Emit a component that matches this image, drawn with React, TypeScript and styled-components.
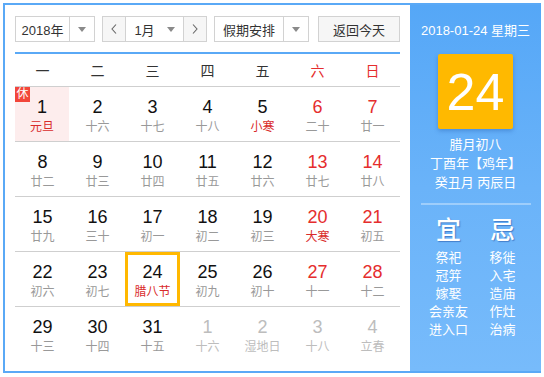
import React from 'react';
import styled, { createGlobalStyle } from 'styled-components';

const GlobalStyle = createGlobalStyle`
  html, body {
    margin: 0;
    padding: 0;
    background: #ffffff;
  }
  body {
    font-family: "Liberation Sans", Arial, "Noto Sans CJK SC", sans-serif;
  }
`;

const Frame = styled.div`
  margin: 3px;
  width: 536px;
  height: 366px;
  border: 2px solid #5aa9f6;
  border-right: none;
  display: flex;
  background: #ffffff;
`;

const Main = styled.div`
  width: 385px;
  padding: 11px 10px 0 10px;
  display: flex;
  flex-direction: column;
`;

const Toolbar = styled.div`
  display: flex;
  height: 26px;
  align-items: stretch;
`;

const SelectBox = styled.div<{ $w: number; $ml?: number }>`
  width: ${(p) => p.$w}px;
  margin-left: ${(p) => p.$ml || 0}px;
  box-sizing: border-box;
  border: 1px solid #d2d2d2;
  display: flex;
  align-items: stretch;
  background: #ffffff;
  font-size: 13px;
  color: #333;
`;

const SelectLabel = styled.div`
  flex: 1;
  display: flex;
  align-items: center;
  justify-content: center;
`;

const ArrowCell = styled.div<{ $border?: boolean }>`
  width: 24px;
  display: flex;
  align-items: center;
  justify-content: center;
  border-left: ${(p) => (p.$border ? '1px solid #d2d2d2' : 'none')};
`;

const NavButton = styled.div<{ $side: 'l' | 'r' }>`
  width: 22px;
  background: #f6f6f6;
  display: flex;
  align-items: center;
  justify-content: center;
  border-${(p) => (p.$side === 'l' ? 'right' : 'left')}: 1px solid #d2d2d2;
`;

const TodayButton = styled.div`
  margin-left: auto;
  width: 82px;
  box-sizing: border-box;
  border: 1px solid #d2d2d2;
  background: #f6f6f6;
  display: flex;
  align-items: center;
  justify-content: center;
  font-size: 13px;
  color: #333;
`;

const BlueRule = styled.div`
  margin-top: 10px;
  height: 2px;
  background: #5aa9f6;
`;

const WeekHead = styled.div`
  display: grid;
  grid-template-columns: repeat(7, 55px);
  height: 32px;
  border-bottom: 1px solid #cfcfcf;
`;

const WeekDay = styled.div<{ $red?: boolean }>`
  display: flex;
  align-items: center;
  justify-content: center;
  font-size: 14px;
  color: ${(p) => (p.$red ? '#e52d2d' : '#333')};
`;

const Row = styled.div<{ $last?: boolean }>`
  display: grid;
  grid-template-columns: repeat(7, 55px);
  height: 54px;
  border-bottom: ${(p) => (p.$last ? 'none' : '1px solid #cfcfcf')};
`;

const Cell = styled.div<{ $holiday?: boolean; $today?: boolean }>`
  position: relative;
  box-sizing: border-box;
  padding-top: 9px;
  text-align: center;
  background: ${(p) => (p.$holiday ? '#fdeded' : 'transparent')};
  box-shadow: ${(p) => (p.$today ? 'inset 0 0 0 3px #ffb800' : 'none')};
  margin-right: ${(p) => (p.$holiday ? '1px' : '0')};
`;

const DayNum = styled.div<{ $tone: 'normal' | 'red' | 'other' }>`
  font-size: 18px;
  line-height: 22px;
  color: ${(p) => (p.$tone === 'red' ? '#e52d2d' : p.$tone === 'other' ? '#bdbdbd' : '#111')};
`;

const Lunar = styled.div<{ $tone: 'normal' | 'red' | 'other' }>`
  font-size: 12px;
  line-height: 18px;
  color: ${(p) => (p.$tone === 'red' ? '#d92b2b' : p.$tone === 'other' ? '#bdbdbd' : '#999')};
`;

const RestBadge = styled.div`
  position: absolute;
  left: 0;
  top: 0;
  width: 15px;
  height: 15px;
  background: #f2463a;
  color: #fff;
  font-size: 12px;
  line-height: 15px;
  text-align: center;
`;

const Side = styled.div`
  width: 131px;
  background: linear-gradient(180deg, #55a7f7 0%, #6ab3f9 50%, #77bbfb 100%);
  display: flex;
  flex-direction: column;
  align-items: center;
  color: #fff;
`;

const SideDate = styled.div`
  margin-top: 16px;
  font-size: 13px;
  line-height: 20px;
`;

const BigDay = styled.div`
  margin-top: 13px;
  width: 75px;
  height: 75px;
  background: #ffb900;
  border-radius: 2px;
  box-shadow: 0 2px 4px rgba(30, 80, 160, 0.35);
  display: flex;
  align-items: center;
  justify-content: center;
  font-size: 52px;
  color: #fff;
`;

const LunarInfo = styled.div`
  margin-top: 6px;
  font-size: 13px;
  line-height: 19px;
  text-align: center;
`;

const SideRule = styled.div`
  margin-top: 11px;
  width: 110px;
  height: 2px;
  background: rgba(255, 255, 255, 0.35);
`;

const Advice = styled.div`
  display: flex;
  margin-top: 8px;
`;

const AdviceCol = styled.div`
  width: 54px;
  display: flex;
  flex-direction: column;
  align-items: center;
`;

const AdviceHead = styled.div`
  font-size: 25px;
  line-height: 34px;
  font-weight: 500;
  text-shadow: 1px 1px 1px rgba(40, 90, 170, 0.6);
  margin-bottom: 2px;
`;

const AdviceItem = styled.div`
  font-size: 13px;
  line-height: 18px;
  white-space: nowrap;
`;

const DownArrow = () => (
  <svg width="8" height="5" viewBox="0 0 8 5">
    <path d="M0 0 L8 0 L4 5 Z" fill="#8a8a8a" />
  </svg>
);

const Chevron = ({ dir }: { dir: 'l' | 'r' }) => (
  <svg width="6" height="10" viewBox="0 0 6 10">
    <polyline
      points={dir === 'l' ? '5,0.5 1,5 5,9.5' : '1,0.5 5,5 1,9.5'}
      fill="none"
      stroke="#666"
      strokeWidth="1.1"
    />
  </svg>
);

type Tone = 'normal' | 'red' | 'other';
interface Day {
  n: number;
  l: string;
  numTone?: Tone;
  lunarTone?: Tone;
  holiday?: boolean;
  today?: boolean;
}

const weeks: Day[][] = [
  [
    { n: 1, l: '元旦', lunarTone: 'red', holiday: true },
    { n: 2, l: '十六' },
    { n: 3, l: '十七' },
    { n: 4, l: '十八' },
    { n: 5, l: '小寒', lunarTone: 'red' },
    { n: 6, l: '二十', numTone: 'red' },
    { n: 7, l: '廿一', numTone: 'red' },
  ],
  [
    { n: 8, l: '廿二' },
    { n: 9, l: '廿三' },
    { n: 10, l: '廿四' },
    { n: 11, l: '廿五' },
    { n: 12, l: '廿六' },
    { n: 13, l: '廿七', numTone: 'red' },
    { n: 14, l: '廿八', numTone: 'red' },
  ],
  [
    { n: 15, l: '廿九' },
    { n: 16, l: '三十' },
    { n: 17, l: '初一' },
    { n: 18, l: '初二' },
    { n: 19, l: '初三' },
    { n: 20, l: '大寒', numTone: 'red', lunarTone: 'red' },
    { n: 21, l: '初五', numTone: 'red' },
  ],
  [
    { n: 22, l: '初六' },
    { n: 23, l: '初七' },
    { n: 24, l: '腊八节', lunarTone: 'red', today: true },
    { n: 25, l: '初九' },
    { n: 26, l: '初十' },
    { n: 27, l: '十一', numTone: 'red' },
    { n: 28, l: '十二', numTone: 'red' },
  ],
  [
    { n: 29, l: '十三' },
    { n: 30, l: '十四' },
    { n: 31, l: '十五' },
    { n: 1, l: '十六', numTone: 'other', lunarTone: 'other' },
    { n: 2, l: '湿地日', numTone: 'other', lunarTone: 'other' },
    { n: 3, l: '十八', numTone: 'other', lunarTone: 'other' },
    { n: 4, l: '立春', numTone: 'other', lunarTone: 'other' },
  ],
];

const weekNames = ['一', '二', '三', '四', '五', '六', '日'];
const good = ['祭祀', '冠笄', '嫁娶', '会亲友', '进入口'];
const bad = ['移徙', '入宅', '造庙', '作灶', '治病'];

export default function App() {
  return (
    <>
      <GlobalStyle />
      <Frame>
        <Main>
          <Toolbar>
            <SelectBox $w={80}>
              <SelectLabel>2018年</SelectLabel>
              <ArrowCell $border>
                <DownArrow />
              </ArrowCell>
            </SelectBox>
            <SelectBox $w={105} $ml={7}>
              <NavButton $side="l">
                <Chevron dir="l" />
              </NavButton>
              <SelectLabel style={{ paddingLeft: 4 }}>1月</SelectLabel>
              <ArrowCell>
                <DownArrow />
              </ArrowCell>
              <NavButton $side="r">
                <Chevron dir="r" />
              </NavButton>
            </SelectBox>
            <SelectBox $w={95} $ml={7}>
              <SelectLabel>假期安排</SelectLabel>
              <ArrowCell $border>
                <DownArrow />
              </ArrowCell>
            </SelectBox>
            <TodayButton>返回今天</TodayButton>
          </Toolbar>
          <BlueRule />
          <WeekHead>
            {weekNames.map((w, i) => (
              <WeekDay key={w} $red={i >= 5}>
                {w}
              </WeekDay>
            ))}
          </WeekHead>
          {weeks.map((week, wi) => (
            <Row key={wi} $last={wi === weeks.length - 1}>
              {week.map((d, di) => (
                <Cell key={di} $holiday={d.holiday} $today={d.today}>
                  {d.holiday && <RestBadge>休</RestBadge>}
                  <DayNum $tone={d.numTone || 'normal'}>{d.n}</DayNum>
                  <Lunar $tone={d.lunarTone || 'normal'}>{d.l}</Lunar>
                </Cell>
              ))}
            </Row>
          ))}
        </Main>
        <Side>
          <SideDate>2018-01-24 星期三</SideDate>
          <BigDay>24</BigDay>
          <LunarInfo>
            腊月初八
            <br />
            丁酉年【鸡年】
            <br />
            癸丑月 丙辰日
          </LunarInfo>
          <SideRule />
          <Advice>
            <AdviceCol>
              <AdviceHead>宜</AdviceHead>
              {good.map((g) => (
                <AdviceItem key={g}>{g}</AdviceItem>
              ))}
            </AdviceCol>
            <AdviceCol>
              <AdviceHead>忌</AdviceHead>
              {bad.map((b) => (
                <AdviceItem key={b}>{b}</AdviceItem>
              ))}
            </AdviceCol>
          </Advice>
        </Side>
      </Frame>
    </>
  );
}
